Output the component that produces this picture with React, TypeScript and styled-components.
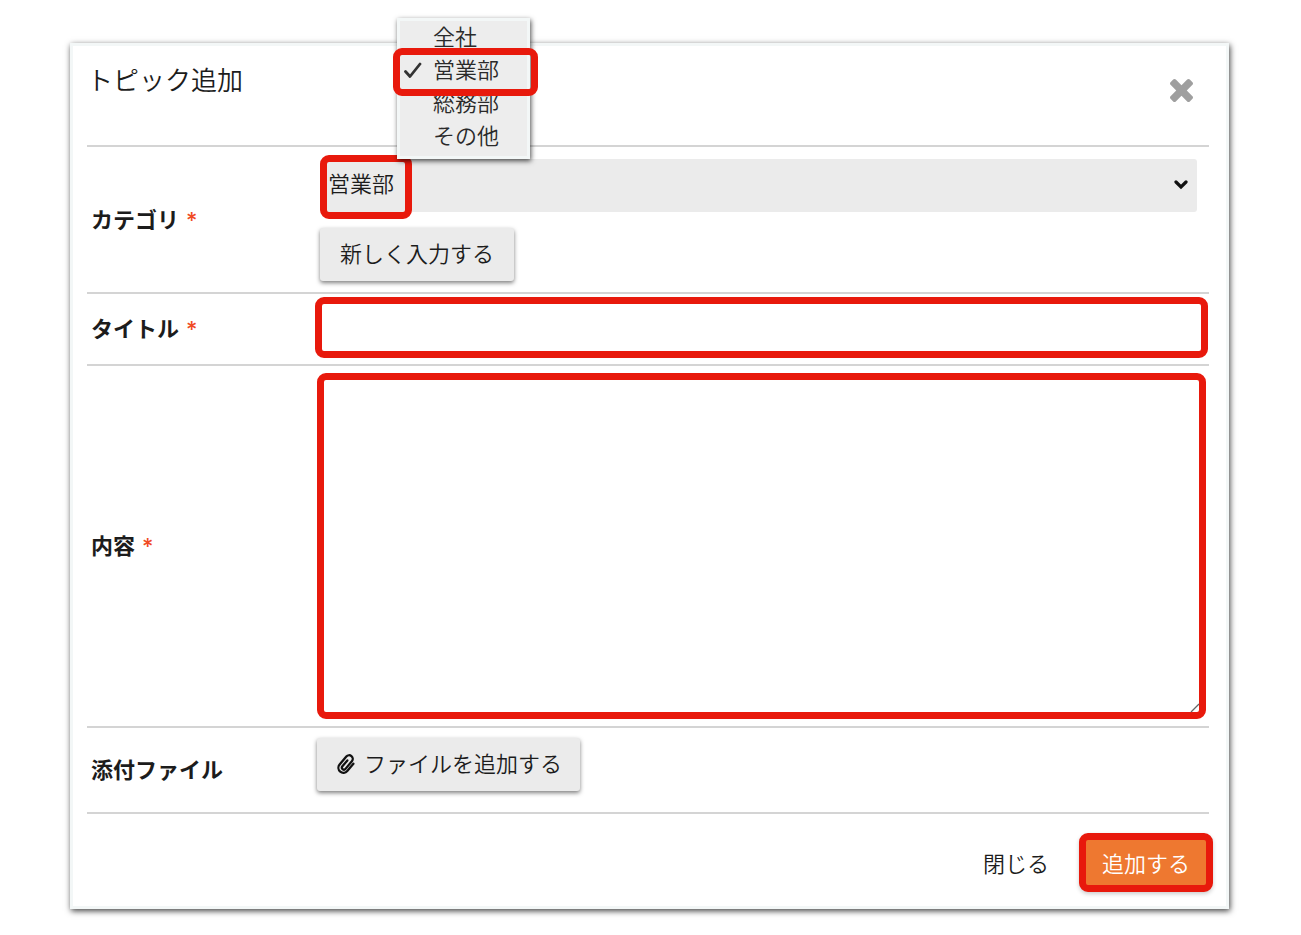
import React, { useState } from 'react';
import styled, { createGlobalStyle, css } from 'styled-components';

const RED = '#e8190c';
const LINE = '#d4d4d4';
const GREY = '#ebebeb';

const GlobalStyle = createGlobalStyle`
  *, *::before, *::after { box-sizing: border-box; }
  body {
    margin: 0;
    background: #fff;
    color: #1c1c1c;
    font-family: "Noto Sans CJK JP", sans-serif;
    font-size: 22px;
    font-weight: 350;
    line-height: 32px;
  }
  button, input, select, textarea { font: inherit; color: inherit; margin: 0; }
`;

const Page = styled.main`
  padding: 43px 72px 26px 70px;
`;

const Dialog = styled.section`
  border: 3px solid #f3f7f7;
  background: #fff;
  box-shadow: 1px 2px 6px rgba(0, 0, 0, 0.75);
`;

const Header = styled.header`
  display: flex;
  justify-content: space-between;
  align-items: flex-start;
  height: 101px;
  margin: 0 17px 0 14px;
  padding: 15px 12px 0 0;
  border-bottom: 2px solid ${LINE};
`;

const Title = styled.h1`
  margin: 0;
  font-size: 26px;
  font-weight: 350;
  line-height: 36px;
`;

const CloseIconButton = styled.button`
  display: flex;
  margin-top: 14px;
  padding: 4px;
  border: 0;
  background: none;
  color: #9f9f9f;
  cursor: pointer;
`;

const Row = styled.div`
  display: grid;
  grid-template-columns: 228px minmax(0, 1fr);
  align-items: center;
  margin: 0 17px 0 14px;
  border-bottom: 2px solid ${LINE};
`;

const labelText = css`
  display: flex;
  align-items: center;
  padding: 0 0 4px 4px;
  font-weight: 600;
`;

const Label = styled.label`
  ${labelText}
`;

const LabelText = styled.span`
  ${labelText}
`;

const Required = styled.span`
  padding: 4px 0 0 7px;
  color: #f04a23;
  font-family: Inter, sans-serif;
  font-weight: 500;
  line-height: 26px;
`;

const CategoryFields = styled.div`
  display: flex;
  flex-direction: column;
  align-items: flex-start;
  gap: 16px;
  padding: 12px 12px 11px 5px;
`;

const SelectBox = styled.div`
  position: relative;
  width: 100%;
`;

const Select = styled.select`
  display: block;
  width: 100%;
  height: 53px;
  padding: 0 40px 7px 8px;
  border: 0;
  border-radius: 3px;
  background: ${GREY};
  appearance: none;
`;

const SelectArrow = styled.svg`
  position: absolute;
  top: 20px;
  right: 9px;
  pointer-events: none;
`;

const Ring = styled.span`
  position: absolute;
  border: 7px solid ${RED};
  border-radius: 9px;
  pointer-events: none;
`;

const ValueRing = styled(Ring)`
  inset: -4px auto -7px 0;
  width: 92px;
`;

const OptionRing = styled(Ring)`
  inset: -6px -11px -9px -7px;
`;

const Menu = styled.ul`
  position: absolute;
  bottom: 100%;
  left: 77px;
  width: 133px;
  margin: 0;
  padding: 0 0 3px;
  border: 3px solid #f3f7f7;
  background: #ededed;
  box-shadow: 1px 2px 5px rgba(0, 0, 0, 0.7);
  color: #2a2a2a;
  list-style: none;
`;

const Option = styled.li<{ $selected: boolean }>`
  position: relative;
  z-index: ${(p) => (p.$selected ? 1 : 0)};
  height: 33px;
  padding-left: 33px;
  line-height: 29px;
  cursor: default;
`;

const Tick = styled.svg`
  position: absolute;
  top: 8px;
  left: 4px;
`;

const PlainButton = styled.button`
  display: inline-flex;
  align-items: center;
  justify-content: center;
  border: 0;
  background: none;
  cursor: pointer;
`;

const RaisedButton = styled(PlainButton)<{ $inset: number }>`
  height: 53px;
  padding: 0 ${(p) => p.$inset}px 5px;
  border-radius: 3px;
  background: ${GREY};
  box-shadow: 0 2px 4px rgba(0, 0, 0, 0.5);
`;

const ClipIcon = styled.svg`
  flex: none;
  margin: 4px 8px 0 1px;
`;

const FieldCell = styled.div<{ $pad: string }>`
  position: relative;
  padding: ${(p) => p.$pad};
`;

const outlined = css`
  display: block;
  width: 100%;
  padding: 6px;
  border: 7px solid ${RED};
  border-radius: 9px;
  background: #fff;
  outline: 0;
`;

const TextInput = styled.input`
  ${outlined}
  height: 61px;
`;

const TextArea = styled.textarea`
  ${outlined}
  height: 346px;
  resize: none;
`;

const Grip = styled.svg`
  position: absolute;
  right: 9px;
  bottom: 13px;
  pointer-events: none;
`;

const Footer = styled.footer`
  display: flex;
  justify-content: flex-end;
  align-items: center;
  gap: 18px;
  padding: 19px 13px 14px;
`;

const DismissButton = styled(PlainButton)`
  height: 53px;
  padding: 0 12px 2px;
`;

const SubmitButton = styled(PlainButton)`
  height: 59px;
  padding: 0 16px 2px;
  border: 7px solid ${RED};
  border-radius: 9px;
  background: #ee7830;
  color: #fff;
  box-shadow: 0 2px 4px rgba(0, 0, 0, 0.2);
`;

const categories = ['全社', '営業部', '総務部', 'その他'];

export default function App() {
  const [category, setCategory] = useState('営業部');

  return (
    <>
      <GlobalStyle />
      <Page>
        <Dialog role="dialog" aria-labelledby="dialog-title">
          <Header>
            <Title id="dialog-title">トピック追加</Title>
            <CloseIconButton type="button" aria-label="閉じる">
              <svg width="23" height="23" viewBox="302 366 1188 1188" fill="currentColor">
                <path d="M1490 1322q0 40-28 68l-136 136q-28 28-68 28t-68-28l-294-294-294 294q-28 28-68 28t-68-28l-136-136q-28-28-28-68t28-68l294-294-294-294q-28-28-28-68t28-68l136-136q28-28 68-28t68 28l294 294 294-294q28-28 68-28t68 28l136 136q28 28 28 68t-28 68l-294 294 294 294q28 28 28 68z" />
              </svg>
            </CloseIconButton>
          </Header>

          <Row>
            <Label htmlFor="category">
              カテゴリ<Required>*</Required>
            </Label>
            <CategoryFields>
              <SelectBox>
                <Select id="category" value={category} onChange={(e) => setCategory(e.target.value)}>
                  {categories.map((name) => (
                    <option key={name}>{name}</option>
                  ))}
                </Select>
                <SelectArrow width="14" height="11" viewBox="0 0 14 11" fill="none">
                  <path d="M2 3l5 5 5-5" stroke="#111" strokeWidth="3.2" strokeLinecap="round" />
                </SelectArrow>
                <ValueRing />
                <Menu role="listbox" aria-label="カテゴリ">
                  {categories.map((name) => (
                    <Option
                      key={name}
                      role="option"
                      aria-selected={name === category}
                      $selected={name === category}
                      onClick={() => setCategory(name)}
                    >
                      {name}
                      {name === category && (
                        <>
                          <Tick width="18" height="17" viewBox="0 0 18 17" fill="none">
                            <path d="M1.5 9.500l4.500 5L16 2" stroke="#333" strokeWidth="2.8" strokeLinecap="round" strokeLinejoin="round" />
                          </Tick>
                          <OptionRing />
                        </>
                      )}
                    </Option>
                  ))}
                </Menu>
              </SelectBox>
              <RaisedButton type="button" $inset={20}>
                新しく入力する
              </RaisedButton>
            </CategoryFields>
          </Row>

          <Row>
            <Label htmlFor="topic-title">
              タイトル<Required>*</Required>
            </Label>
            <FieldCell $pad="3px 1px 6px 0">
              <TextInput id="topic-title" type="text" />
            </FieldCell>
          </Row>

          <Row>
            <Label htmlFor="topic-body">
              内容<Required>*</Required>
            </Label>
            <FieldCell $pad="7px 3px 7px 2px">
              <TextArea id="topic-body" />
              <Grip width="10" height="10" viewBox="0 0 10 10" fill="none">
                <path d="M1 9L9 1" stroke="#666" strokeWidth="1.2" />
              </Grip>
            </FieldCell>
          </Row>

          <Row>
            <LabelText>添付ファイル</LabelText>
            <FieldCell $pad="10px 0 21px 2px">
              <RaisedButton type="button" $inset={18}>
                <ClipIcon width="20" height="22" viewBox="-11 -12 22 24" fill="none">
                  <path
                    transform="rotate(40)"
                    d="M6 -5.500V5A5.500 5.500 0 0 1 -5 5V-6.500A4 4 0 0 1 3 -6.500V4.500A2.200 2.200 0 0 1 -1.400 4.500V-4"
                    stroke="#111"
                    strokeWidth="2.500"
                    strokeLinecap="round"
                  />
                </ClipIcon>
                ファイルを追加する
              </RaisedButton>
            </FieldCell>
          </Row>

          <Footer>
            <DismissButton type="button">閉じる</DismissButton>
            <SubmitButton type="submit">追加する</SubmitButton>
          </Footer>
        </Dialog>
      </Page>
    </>
  );
}
